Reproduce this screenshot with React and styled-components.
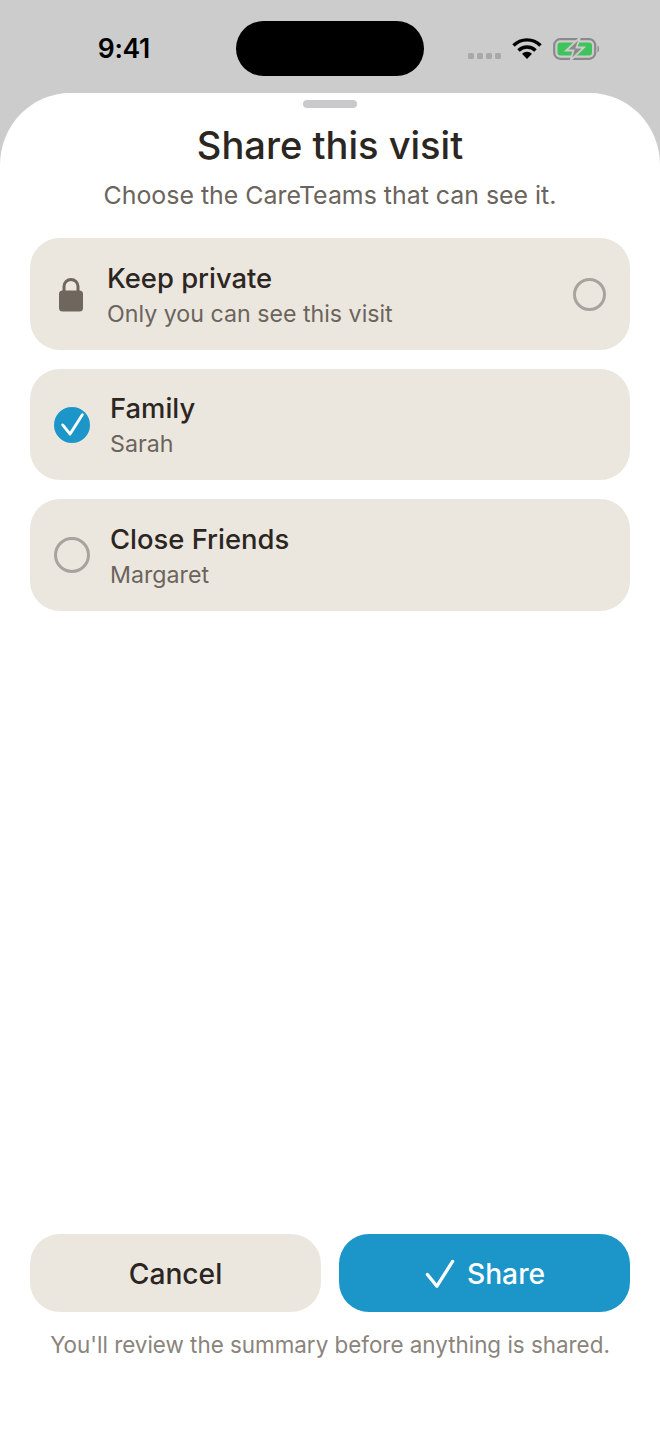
import React from 'react';
import styled, { createGlobalStyle } from 'styled-components';

const GlobalStyle = createGlobalStyle`
  html, body { margin: 0; padding: 0; background: #cccccc; }
  body { font-family: 'Inter', 'Liberation Sans', sans-serif; }
`;

const Screen = styled.div`
  width: 660px;
  height: 1434px;
  display: flex;
  flex-direction: column;
  background: #cccccc;
  overflow: hidden;
`;

const StatusBar = styled.div`
  height: 93px;
  flex: none;
  display: grid;
  grid-template-columns: 236px 188px 1fr;
  padding-top: 21px;
  box-sizing: border-box;
`;

const Clock = styled.div`
  font-size: 26.5px;
  font-weight: 600;
  line-height: 55px;
  color: #000;
  text-align: right;
  padding-right: 86px;
  letter-spacing: -0.3px;
`;

const Island = styled.div`
  height: 55px;
  background: #000;
  border-radius: 28px;
`;

const StatusIcons = styled.div`
  height: 55px;
  display: flex;
  align-items: center;
  padding-left: 44px;
`;

const Sheet = styled.div`
  flex: 1;
  background: #fff;
  border-radius: 70px 70px 0 0 / 72px 72px 0 0;
  display: flex;
  flex-direction: column;
  align-items: center;
  padding: 7px 30px 0;
`;

const Handle = styled.div`
  width: 54px;
  height: 8px;
  border-radius: 4px;
  background: #c9c9cc;
  flex: none;
`;

const Title = styled.h1`
  margin: 13px 0 0;
  font-size: 38.1px;
  line-height: 48px;
  font-weight: 500;
  color: #2b2622;
`;

const Subtitle = styled.p`
  margin: 10px 0 0;
  font-size: 24.9px;
  line-height: 32px;
  font-weight: 400;
  color: #6b645c;
`;

const Options = styled.div`
  align-self: stretch;
  margin-top: 27px;
  display: flex;
  flex-direction: column;
  gap: 18.75px;
`;

const Option = styled.div`
  height: 111.75px;
  border-radius: 30px;
  background: #ebe7df;
  display: flex;
  align-items: center;
  padding: 0 24px 0 ${(p) => (p.$lead ? '28px' : '24px')};
  gap: ${(p) => (p.$lead ? '23px' : '20px')};
`;

const Texts = styled.div`
  flex: 1;
  display: flex;
  flex-direction: column;
  padding-top: 4px;
`;

const OptionName = styled.div`
  font-size: 27.4px;
  line-height: 36px;
  font-weight: 500;
  color: #2b2622;
`;

const OptionSub = styled.div`
  font-size: 23.2px;
  line-height: 36px;
  color: #6b645c;
`;

const Radio = styled.div`
  width: ${(p) => p.$size}px;
  height: ${(p) => p.$size}px;
  margin-top: 1px;
  flex: none;
  box-sizing: border-box;
  border-radius: 50%;
  border: 3px solid #a8a39c;
`;

const Checked = styled.div`
  width: 36px;
  height: 36px;
  margin-top: 1px;
  flex: none;
  border-radius: 50%;
  background: #1c96c9;
  display: flex;
  align-items: center;
  justify-content: center;
`;

const LockIcon = styled.svg`
  margin-top: 2px;
  flex: none;
`;

const Spacer = styled.div`
  flex: 1;
`;

const Buttons = styled.div`
  align-self: stretch;
  display: grid;
  grid-template-columns: 1fr 1fr;
  gap: 18px;
`;

const Button = styled.div`
  height: 78px;
  box-sizing: border-box;
  padding-top: 1px;
  border-radius: 30px;
  background: ${(p) => (p.$primary ? '#1c96c9' : '#ebe7df')};
  color: ${(p) => (p.$primary ? '#fff' : '#2b2622')};
  display: flex;
  align-items: center;
  justify-content: center;
  gap: 11px;
  font-size: 28.2px;
  font-weight: 500;
`;

const Footnote = styled.p`
  margin: 17px 0 73px;
  font-size: 22.4px;
  line-height: 32px;
  color: #8a847c;
`;

const DotsWrap = styled.svg`
  margin-top: 15px;
`;

const Wifi = () => (
  <svg width="30" height="22" viewBox="0 0 30 22" style={{ marginLeft: 10 }}>
    <path d="M1.5 7.5a19 19 0 0 1 27 0" fill="none" stroke="#000" strokeWidth="3.4" />
    <path d="M6.5 12.5a12 12 0 0 1 17 0" fill="none" stroke="#000" strokeWidth="3.4" />
    <path d="M15 21l-5-5.2a7 7 0 0 1 10 0z" fill="#000" />
  </svg>
);

const Battery = () => (
  <svg width="48" height="24" viewBox="0 0 48 24" style={{ marginLeft: 11 }}>
    <rect x="1.2" y="2.2" width="41" height="19.6" rx="6" fill="none" stroke="#8a8a8a" strokeWidth="2.2" />
    <rect x="4.5" y="5.5" width="34.5" height="13" rx="3" fill="#3ec45c" />
    <path d="M44.5 8.5c2 .4 2 6.6 0 7z" fill="#8a8a8a" />
    <path d="M27 0.5 13 13.5h7.5L17.5 23.5 31 10.5h-7.5z" fill="#8a8a8a" stroke="#cccccc" strokeWidth="1.8" />
  </svg>
);

const Dots = () => (
  <DotsWrap width="34" height="8" viewBox="0 0 34 8">
    {[0, 9, 18, 27].map((x) => (
      <rect key={x} x={x} y="1" width="6" height="6" rx="1.5" fill="#a8a8a8" />
    ))}
  </DotsWrap>
);

const Lock = () => (
  <LockIcon width="26" height="36" viewBox="0 0 26 36">
    <path d="M6 15V9.5a7 7 0 0 1 14 0V15" fill="none" stroke="#6f675d" strokeWidth="3" />
    <rect x="1" y="13.5" width="24" height="21" rx="3.5" fill="#6f675d" />
  </LockIcon>
);

const Tick = ({ size, width }) => (
  <svg width={size} height={size} viewBox="0 0 28 28">
    <path d="M3 14.5 11.3 24.7 25 3" fill="none" stroke="#fff" strokeWidth={width} strokeLinecap="round" strokeLinejoin="round" />
  </svg>
);

export default function App() {
  return (
    <Screen>
      <GlobalStyle />
      <StatusBar>
        <Clock>9:41</Clock>
        <Island />
        <StatusIcons>
          <Dots />
          <Wifi />
          <Battery />
        </StatusIcons>
      </StatusBar>
      <Sheet>
        <Handle />
        <Title>Share this visit</Title>
        <Subtitle>Choose the CareTeams that can see it.</Subtitle>
        <Options>
          <Option $lead>
            <Lock />
            <Texts>
              <OptionName>Keep private</OptionName>
              <OptionSub>Only you can see this visit</OptionSub>
            </Texts>
            <Radio $size={33} />
          </Option>
          <Option>
            <Checked>
              <Tick size={25} width={3.2} />
            </Checked>
            <Texts>
              <OptionName>Family</OptionName>
              <OptionSub>Sarah</OptionSub>
            </Texts>
          </Option>
          <Option>
            <Radio $size={36} />
            <Texts>
              <OptionName>Close Friends</OptionName>
              <OptionSub>Margaret</OptionSub>
            </Texts>
          </Option>
        </Options>
        <Spacer />
        <Buttons>
          <Button>Cancel</Button>
          <Button $primary>
            <Tick size={32} width={2.9} />
            Share
          </Button>
        </Buttons>
        <Footnote>You'll review the summary before anything is shared.</Footnote>
      </Sheet>
    </Screen>
  );
}
